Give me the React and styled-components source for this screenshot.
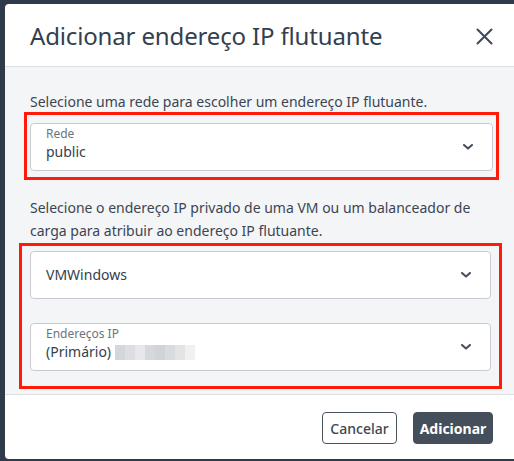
import styled, { createGlobalStyle } from "styled-components";

const GlobalStyle = createGlobalStyle`
  html, body {
    margin: 0;
    padding: 0;
    background: #2f3b4b;
    overflow: hidden;
    font-family: "Noto Sans", "Open Sans", sans-serif;
  }
`;

const COLORS = {
  text: "#2d3a4a",
  body: "#3b4552",
  muted: "#6b7480",
  line: "#dcdfe3",
  field: "#c8ccd1",
  red: "#ff1a0a",
  dark: "#454f5b",
};

const Chevron = () => (
  <svg width="10" height="6" viewBox="0 0 10 6" fill="none">
    <path d="M1 1 L5 4.6 L9 1" stroke="#434c58" strokeWidth="2" strokeLinecap="round" strokeLinejoin="round" />
  </svg>
);

const CloseIcon = () => (
  <svg width="17" height="17" viewBox="0 0 17 17" fill="none">
    <path d="M1.5 1.5 L15.5 15.5 M15.5 1.5 L1.5 15.5" stroke="#3d4959" strokeWidth="2" strokeLinecap="round" />
  </svg>
);

const blur = ["#d3d6da", "#dcdee1", "#e7e8ea", "#d6d8dc", "#d0d3d7", "#d9dbde", "#e2e4e6", "#f0f1f2"];

const Select = ({ label, value, children }) => (
  <Field>
    <FieldText $labeled={!!label}>
      {label && <Label>{label}</Label>}
      <Value>
        {value}
        {children}
      </Value>
    </FieldText>
    <Chevron />
  </Field>
);

const App = () => {
  return (
    <>
      <GlobalStyle />
      <Modal>
        <Header>
          <Title>Adicionar endereço IP flutuante</Title>
          <CloseButton aria-label="Fechar">
            <CloseIcon />
          </CloseButton>
        </Header>
        <Body>
          <Text>Selecione uma rede para escolher um endereço IP flutuante.</Text>
          <Highlight $left={6} $right={7} $padX={3} $top={8} $bottom={6}>
            <Select label="Rede" value="public" />
          </Highlight>
          <Text $top={16} $lh={23}>
            Selecione o endereço IP privado de uma VM ou um balanceador de carga para atribuir ao
            endereço IP flutuante.
          </Text>
          <Highlight $left={11} $right={10} $padX={8} $top={5} $bottom={15} $gap={24} $mt={1}>
            <Select value="VMWindows" />
            <Select label="Endereços IP" value="(Primário)">
              <Blurred>
                {blur.map((c, i) => (
                  <BlurCell key={i} $color={c} />
                ))}
              </Blurred>
            </Select>
          </Highlight>
        </Body>
        <Footer>
          <Button $w={75}>Cancelar</Button>
          <Button $primary $w={80}>Adicionar</Button>
        </Footer>
      </Modal>
    </>
  );
};

export default App;

const Modal = styled.div`
  margin: 4px 0 0 5px;
  width: 512px;
  height: 455px;
  background: #fff;
  border-radius: 4px 4px 0 4px;
  display: flex;
  flex-direction: column;
  overflow: hidden;
`;

const Header = styled.header`
  height: 63px;
  box-sizing: border-box;
  padding: 0 24px 0 25px;
  display: flex;
  align-items: center;
  justify-content: space-between;
  border-bottom: 1px solid ${COLORS.line};
`;

const Title = styled.h1`
  margin: 2px 0 0;
  font-size: 24px;
  font-weight: 400;
  line-height: 1;
  letter-spacing: -0.15px;
  color: #33404f;
`;

const CloseButton = styled.button`
  border: 0;
  background: none;
  padding: 0;
  margin: 2px 0 0;
  width: 17px;
  height: 17px;
  display: flex;
`;

const Body = styled.main`
  flex: 0 0 auto;
  background: #f4f5f7;
  padding: 25px 25px 5px 25px;
  display: flex;
  flex-direction: column;
  border-bottom: 1px solid ${COLORS.line};
`;

const Text = styled.p`
  margin: ${(p) => p.$top || 0}px 0 0;
  font-size: 14px;
  line-height: ${(p) => p.$lh || 20}px;
  color: ${COLORS.body};
`;

const Highlight = styled.div`
  margin: ${(p) => p.$mt || 0}px -${(p) => p.$right}px 0 -${(p) => p.$left}px;
  border: 3px solid ${COLORS.red};
  padding: ${(p) => p.$top}px ${(p) => p.$padX}px ${(p) => p.$bottom}px;
  display: flex;
  flex-direction: column;
  gap: ${(p) => p.$gap || 0}px;
`;

const Field = styled.div`
  height: 48px;
  box-sizing: border-box;
  background: #fff;
  border: 1px solid ${COLORS.field};
  border-radius: 4px;
  padding: 0 19px 0 15px;
  display: flex;
  align-items: center;
  justify-content: space-between;
`;

const FieldText = styled.div`
  display: flex;
  flex-direction: column;
  align-self: ${(p) => (p.$labeled ? "flex-start" : "center")};
`;

const Label = styled.span`
  font-size: 12px;
  line-height: 14px;
  margin-top: 3px;
  color: ${COLORS.muted};
`;

const Value = styled.span`
  display: flex;
  align-items: center;
  font-size: 14px;
  line-height: 22px;
  color: #34404e;
`;

const Blurred = styled.span`
  display: flex;
  margin: 1px 0 0 4px;
  height: 15px;
`;

const BlurCell = styled.span`
  width: 10px;
  height: 15px;
  background: ${(p) => p.$color};
`;

const Footer = styled.footer`
  flex: 1;
  display: flex;
  justify-content: flex-end;
  align-items: flex-start;
  gap: 16px;
  padding: 17px 24px 0 0;
`;

const Button = styled.button`
  width: ${(p) => p.$w}px;
  height: 32px;
  box-sizing: border-box;
  padding: 0;
  border-radius: 4px;
  font-family: "Noto Sans", "Open Sans", sans-serif;
  font-size: 14px;
  font-weight: ${(p) => (p.$primary ? 700 : 500)};
  color: ${(p) => (p.$primary ? "#fff" : "#3d4650")};
  background: ${(p) => (p.$primary ? COLORS.dark : "#fff")};
  border: 1px solid ${(p) => (p.$primary ? COLORS.dark : "#4a525c")};
`;
